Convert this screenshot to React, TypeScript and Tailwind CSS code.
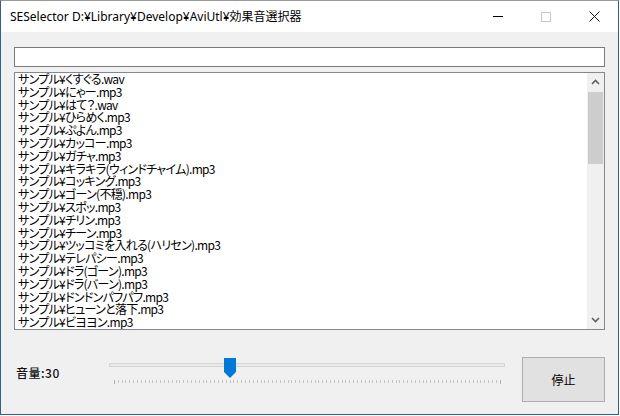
import React from "react";

const files = [
  "くすぐる.wav",
  "にゃー.mp3",
  "はて？.wav",
  "ひらめく.mp3",
  "ぷよん.mp3",
  "カッコー.mp3",
  "ガチャ.mp3",
  "キラキラ(ウィンドチャイム).mp3",
  "コッキング.mp3",
  "ゴーン(不穏).mp3",
  "スポッ.mp3",
  "チリン.mp3",
  "チーン.mp3",
  "ツッコミを入れる(ハリセン).mp3",
  "テレパシー.mp3",
  "ドラ(ゴーン).mp3",
  "ドラ(バーン).mp3",
  "ドンドンパフパフ.mp3",
  "ヒューンと落下.mp3",
  "ビヨヨン.mp3",
];

const jp = "font-['Noto_Sans_CJK_JP',sans-serif]";

const Chevron = ({ up }: { up?: boolean }) => (
  <svg width="9" height="6" viewBox="0 0 9 6">
    <path
      d={up ? "M1 5 L4.5 1.5 L8 5" : "M1 1 L4.5 4.5 L8 1"}
      fill="none"
      stroke="#606060"
      strokeWidth="1.6"
    />
  </svg>
);

const TitleBar = () => (
  <div className="flex h-[31px] items-center bg-white">
    <div className="flex-1 pl-[9px] pt-[1px] text-[12px] text-black font-['Noto_Sans','Noto_Sans_CJK_JP',sans-serif]">
      SESelector D:¥Library¥Develop¥AviUtl¥効果音選択器
    </div>
    <div className="flex h-full">
      <div className="flex w-[48px] items-center justify-center">
        <div className="h-px w-[10px] bg-black" />
      </div>
      <div className="flex w-[48px] items-center justify-center">
        <div className="h-[10px] w-[10px] border border-[#c8c8c8]" />
      </div>
      <div className="flex w-[48px] items-center justify-center">
        <svg width="11" height="11" viewBox="0 0 11 11">
          <path d="M0.5 0.5 L10.5 10.5 M10.5 0.5 L0.5 10.5" stroke="#111" strokeWidth="1" />
        </svg>
      </div>
    </div>
  </div>
);

const ListBox = () => (
  <div className="mt-[5px] flex h-[258px] border border-[#828790] bg-white">
    <div
      className={`flex-1 overflow-hidden pl-[3px] text-[12px] leading-[12.8px] tracking-[-0.7px] text-black ${jp} [font-feature-settings:'palt']`}
    >
      {files.map((f) => (
        <div key={f} className="h-[12.8px] whitespace-nowrap">
          サンプル¥{f}
        </div>
      ))}
    </div>
    <div className="flex w-[17px] flex-col bg-[#f0f0f0]">
      <div className="flex h-[18px] items-center justify-center">
        <Chevron up />
      </div>
      <div className="mx-px mt-px h-[72px] bg-[#cdcdcd]" />
      <div className="flex-1" />
      <div className="flex h-[18px] items-center justify-center">
        <Chevron />
      </div>
    </div>
  </div>
);

const Slider = () => (
  <div className="relative h-[45px] w-[397px]">
    <div className="absolute left-0 right-0 top-[6px] h-[4px] border border-[#d6d6d6] bg-[#e7eaea]" />
    <svg className="absolute left-[115px] top-px" width="12" height="21" viewBox="0 0 12 21">
      <path d="M0 0 H12 V14 L6 20 L0 14 Z" fill="#0078d7" />
    </svg>
    <div className="absolute left-[5px] top-[23px] flex w-[388px] items-start justify-between">
      {Array.from({ length: 101 }, (_, i) => (
        <div
          key={i}
          className={i === 0 || i === 100 ? "h-[4px] w-px bg-[#b0b0b0]" : "h-[3px] w-px bg-[#c4c4c4]"}
        />
      ))}
    </div>
  </div>
);

export default function App() {
  return (
    <div className="h-[416px] w-[620px] overflow-hidden bg-white">
      <div className="flex h-[415px] w-[619px] flex-col border border-[#2f6286] border-t-[#9a9a9a]">
        <TitleBar />
        <div className="flex flex-1 flex-col bg-[#f0f0f0] px-[13px]">
          <div className="mt-[15px] h-[20px] border border-[#7a7a7a] bg-white" />
          <ListBox />
          <div className="mt-[27px] flex">
            <div className={`w-[95px] pl-[2px] pt-[7px] text-[12px] font-medium tracking-[0.5px] text-[#111] ${jp}`}>
              音量:30
            </div>
            <Slider />
            <button
              className={`ml-[17px] h-[45px] w-[83px] border border-[#adadad] bg-[#e1e1e1] text-[12px] text-black ${jp}`}
            >
              停止
            </button>
          </div>
        </div>
      </div>
    </div>
  );
}
